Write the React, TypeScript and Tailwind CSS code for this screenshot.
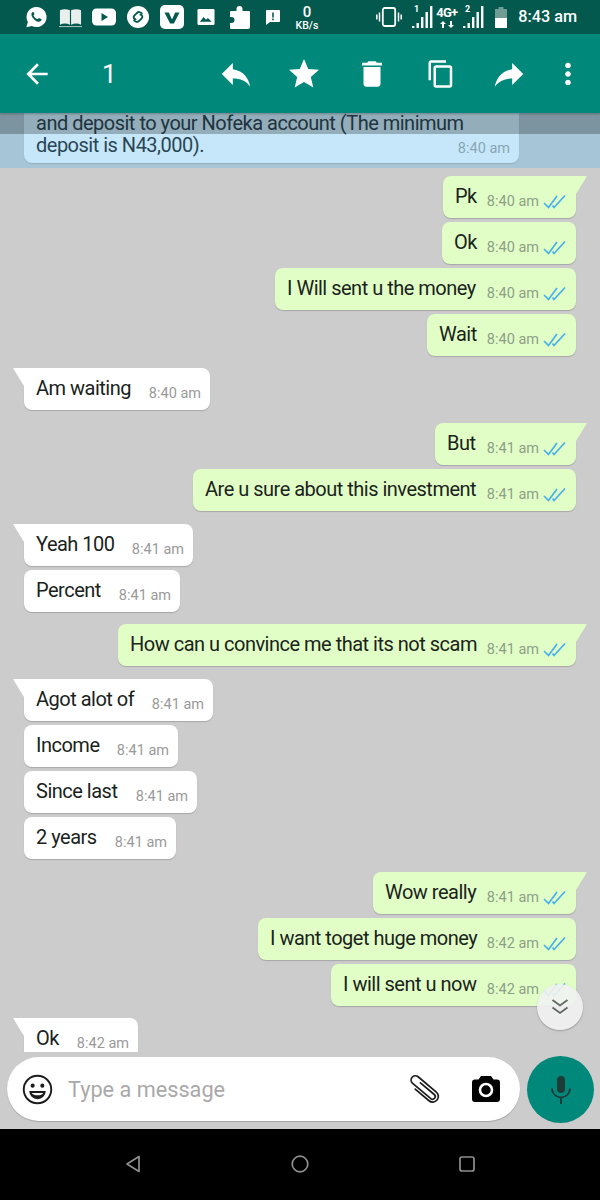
import React from "react";

const F = "font-['Roboto',sans-serif]";

function Ticks() {
  return (
    <svg width="23" height="15" viewBox="0 0 23 15" fill="none" stroke="#45b0ea" strokeWidth="1.700" className="-mt-[2px]">
      <path d="M1 9 L5.500 13.500 L14 2" />
      <path d="M9.500 11.500 L11 13.500 L22 1.500" />
    </svg>
  );
}

type M = { t: string; time: string; tail?: boolean; w: number; mt: number };

const items: (M & { out: boolean })[] = [
  { out: true, t: "Pk", time: "8:40 am", tail: true, w: 133, mt: 8 },
  { out: true, t: "Ok", time: "8:40 am", w: 134, mt: 4 },
  { out: true, t: "I Will sent u the money", time: "8:40 am", w: 301, mt: 4 },
  { out: true, t: "Wait", time: "8:40 am", w: 149, mt: 4 },
  { out: false, t: "Am waiting", time: "8:40 am", tail: true, w: 186, mt: 12 },
  { out: true, t: "But", time: "8:41 am", tail: true, w: 141, mt: 13 },
  { out: true, t: "Are u sure about this investment", time: "8:41 am", w: 383, mt: 4 },
  { out: false, t: "Yeah 100", time: "8:41 am", tail: true, w: 169, mt: 13 },
  { out: false, t: "Percent", time: "8:41 am", w: 156, mt: 4 },
  { out: true, t: "How can u convince me that its not scam", time: "8:41 am", tail: true, w: 458, mt: 12 },
  { out: false, t: "Agot alot of", time: "8:41 am", tail: true, w: 189, mt: 13 },
  { out: false, t: "Income", time: "8:41 am", w: 154, mt: 4 },
  { out: false, t: "Since last", time: "8:41 am", w: 173, mt: 4 },
  { out: false, t: "2 years", time: "8:41 am", w: 152, mt: 4 },
  { out: true, t: "Wow really", time: "8:41 am", tail: true, w: 203, mt: 13 },
  { out: true, t: "I want toget huge money", time: "8:42 am", w: 318, mt: 4 },
  { out: true, t: "I will sent u now", time: "8:42 am", w: 245, mt: 4 },
  { out: false, t: "Ok", time: "8:42 am", tail: true, w: 114, mt: 12 },
];

function Bubble({ m }: { m: M & { out: boolean } }) {
  return (
    <div
      className={`relative h-[42px] shrink-0 flex items-start justify-between pl-3 rounded-lg shadow-[0_1px_1px_rgba(0,0,0,0.18)] ${
        m.out ? "self-end bg-[#e1fec6] pr-[10px] mr-6" : "self-start bg-white pr-[9px] ml-6"
      } ${m.tail ? (m.out ? "rounded-tr-none" : "rounded-tl-none") : ""}`}
      style={{ width: m.w, marginTop: m.mt }}
    >
      {m.tail && (
        <svg
          width="11"
          height="22"
          viewBox="0 0 11 22"
          className={`absolute top-0 ${m.out ? "left-full" : "right-full"}`}
        >
          <path d={m.out ? "M0 0 H10 Q11 0 10.400 1 L0 18 Z" : "M11 0 H1 Q0 0 .6 1 L11 18 Z"} fill={m.out ? "#e1fec6" : "#ffffff"} />
        </svg>
      )}
      <span className="mt-[6px] text-[20px] tracking-[-0.5px] leading-[28px] text-[#1a231c] whitespace-nowrap">{m.t}</span>
      <span className="mt-[18px] flex items-center gap-[4px] text-[14.500px] leading-[16px] whitespace-nowrap">
        <span className={m.out ? "text-[#8e9f88]" : "text-[#9a9a9a]"}>{m.time}</span>
        {m.out && <Ticks />}
      </span>
    </div>
  );
}

function ToolIcon({ d, size = 36, className = "" }: { d: string; size?: number; className?: string }) {
  return (
    <svg width={size} height={size} viewBox="0 0 24 24" fill="#ffffff" className={`shrink-0 ${className}`}>
      <path d={d} />
    </svg>
  );
}

function Signal({ n, className = "" }: { n: string; className?: string }) {
  return (
    <svg width="21" height="26" viewBox="0 0 21 26" fill="#fff" className={className}>
      <path d="M0 23h2.400v2H0zM4.500 20h2.400v5H4.500zM9 14h2.400v11H9zM13.500 9h2.400v16h-2.400zM18 3h2.400v22H18z" />
      <text x="2" y="9" fontSize="9" fontWeight="700" fontFamily="Roboto, sans-serif" fill="#fff">{n}</text>
    </svg>
  );
}

function StatusBar() {
  return (
    <div className="h-[34px] shrink-0 bg-[#04594e] flex items-center text-white relative">
      <div className="flex items-center pl-[25px]">
        <svg width="23" height="24" viewBox="0 0 24 24">
          <path d="M12 1.500a10.500 10.500 0 0 0-9 15.800L1.400 22.800l5.700-1.500A10.500 10.500 0 1 0 12 1.500z" fill="#fff" />
          <path d="M8.400 6.800c-.4 0-1 .2-1.300.8-.8 1.400-.5 3.200.9 5.100 1.700 2.400 3.900 3.900 6 4.300 1.400.2 2.700-.4 3.100-1.500.2-.6.2-1 .1-1.200l-2.600-1.300c-.2 0-.9 1-1.200 1.200-.2.2-.4.2-.7 0-1.700-.8-2.900-2-3.700-3.600-.1-.3 0-.5.1-.6l.7-.9c.1-.2.1-.4 0-.6L9 7.100c-.1-.2-.3-.3-.6-.3z" fill="#04594e" />
        </svg>
        <svg width="23" height="21" viewBox="0 0 24 21" className="ml-[11px]">
          <path d="M1 3c3-1.600 7-1.600 10.400 0v15C8 16.500 4 16.500 1 18z M12.600 3C16 1.400 20 1.400 23 3v15c-3-1.500-7-1.500-10.400 0z" fill="#e8efed" />
          <path d="M0 19.500h24v1H0z" fill="#b9cbc7" />
        </svg>
        <svg width="24" height="18" viewBox="0 0 24 18" className="ml-[10px]">
          <rect width="24" height="17" y=".5" rx="4.500" fill="#fff" />
          <path d="M9.500 5v8l6.500-4z" fill="#04594e" />
        </svg>
        <svg width="22" height="22" viewBox="0 0 22 22" className="ml-[11px]">
          <circle cx="11" cy="11" r="11" fill="#fff" />
          <g fill="none" stroke="#04594e" strokeWidth="1.900" strokeLinecap="round">
            <path d="M14.800 7.300C13.300 5.700 11.200 5.700 9.800 7.100L7.300 9.600C6 11 6.700 13 8.600 13.400" />
            <path d="M14.800 7.300C13.300 5.700 11.200 5.700 9.800 7.100L7.300 9.600C6 11 6.700 13 8.600 13.400" transform="rotate(180 11 11)" />
          </g>
        </svg>
        <svg width="24" height="24" viewBox="0 0 24 24" className="ml-[11px]">
          <rect width="24" height="24" rx="5" fill="#fff" />
          <path d="M4.500 7.500h4.300l3.200 7 3.200-7h4.300l-5.600 11h-3.800z" fill="#04594e" />
        </svg>
        <svg width="18" height="18" viewBox="0 0 19 18" className="ml-[13px]">
          <rect width="18" height="17" x=".5" y=".5" rx="1.500" fill="#fff" />
          <path d="M3 14l4-5 2.500 3 2-2 4 4z" fill="#04594e" />
        </svg>
        <svg width="21" height="24" viewBox="0 0 21 24" className="ml-[14px]">
          <path d="M2 6h5.500V4a3 3 0 0 1 6 0v2H20a1 1 0 0 1 1 1v15a2 2 0 0 1-2 2H2a1 1 0 0 1-1-1v-5h1.500a3 3 0 0 0 0-6H1V7a1 1 0 0 1 1-1z" fill="#fff" />
        </svg>
        <svg width="16" height="16" viewBox="0 0 16 16" className="ml-[15px]">
          <path d="M2 1h12a1 1 0 0 1 1 1v10a1 1 0 0 1-1 1H5l-4 3V2a1 1 0 0 1 1-1z" fill="#fff" />
          <path d="M7.200 3.500h1.600v5H7.200zM7.200 9.600h1.600v1.600H7.200z" fill="#04594e" />
        </svg>
      </div>
      <div className="absolute left-[292px] top-[6px] w-[30px] text-center font-medium">
        <div className="text-[15px] leading-[12px]">0</div>
        <div className="text-[10.500px] leading-[9px] mt-[3px]">KB/s</div>
      </div>
      <div className="ml-auto flex items-center pr-[23px]">
        <svg width="26" height="22" viewBox="0 0 26 22" fill="none" stroke="#fff" className="shrink-0">
          <rect x="6.800" y="2" width="12.400" height="18" rx="2" strokeWidth="1.800" />
          <path d="M3.500 6.500v9M.8 8.500v5M22.500 6.500v9M25.200 8.500v5" strokeWidth="1.500" />
        </svg>
        <Signal n="1" className="ml-[10px] -mt-[2px]" />
        <div className="w-[21px] ml-[3px] flex flex-col items-center font-bold">
          <div className="text-[13px] leading-[12px] tracking-[-0.8px]">4G+</div>
          <svg width="14" height="7" viewBox="0 0 14 7" fill="#fff" className="mt-[2px]">
            <path d="M3 0l3 3H4v4H2V3H0zM11 7l3-3h-2V0h-2v4H8z" />
          </svg>
        </div>
        <Signal n="2" className="ml-[6px] -mt-[2px]" />
        <svg width="12" height="21" viewBox="0 0 12 21" className="ml-[11px]">
          <rect x="3.500" y="0" width="5" height="3" fill="#6f9c93" />
          <rect x="0" y="2" width="12" height="9" fill="#6f9c93" />
          <rect x="0" y="11" width="12" height="10" fill="#fff" />
        </svg>
        <span className="ml-[11px] text-[16.200px] leading-[20px] font-medium">8:43 am</span>
      </div>
    </div>
  );
}

function Toolbar() {
  return (
    <div className="h-[79px] shrink-0 bg-[#00897a] flex items-center relative z-10 shadow-[0_1px_2px_rgba(0,0,0,0.25)]">
      <ToolIcon className="ml-[21px]" size={32} d="M20 11H7.830l5.590-5.590L12 4l-8 8 8 8 1.410-1.410L7.830 13H20z" />
      <span className="ml-[49px] w-[16px] shrink-0 text-white text-[26px] leading-[30px] font-normal">1</span>
      <ToolIcon className="ml-[99px]" size={38} d="M10 9V5l-7 7 7 7v-4.100c5 0 8.500 1.600 11 5.100-1-5-4-10-11-11z" />
      <ToolIcon className="ml-[31px]" size={36} d="M12 17.270 18.180 21l-1.640-7.030L22 9.240l-7.190-.61L12 2 9.190 8.630 2 9.240l5.460 4.730L5.820 21z" />
      <ToolIcon className="ml-[33px]" size={34} d="M6 19c0 1.100.9 2 2 2h8c1.100 0 2-.9 2-2V7H6v12zM19 4h-3.500l-1-1h-5l-1 1H5v2h14V4z" />
      <ToolIcon className="ml-[37px]" size={30} d="M16 1H4c-1.100 0-2 .9-2 2v14h2V3h12V1zm3 4H8c-1.100 0-2 .9-2 2v14c0 1.100.9 2 2 2h11c1.100 0 2-.9 2-2V7c0-1.100-.9-2-2-2zm0 16H8V7h11v14z" />
      <ToolIcon className="ml-[34px]" size={38} d="M14 9V5l7 7-7 7v-4.100c-5 0-8.500 1.600-11 5.100 1-5 4-10 11-11z" />
      <ToolIcon className="ml-[23px]" size={34} d="M12 8c1.100 0 2-.9 2-2s-.9-2-2-2-2 .9-2 2 .9 2 2 2zm0 2c-1.100 0-2 .9-2 2s.9 2 2 2 2-.9 2-2-.9-2-2-2zm0 6c-1.100 0-2 .9-2 2s.9 2 2 2 2-.9 2-2-.9-2-2-2z" />
    </div>
  );
}

function Banner() {
  return (
    <div className="relative h-[55px] shrink-0 bg-[#a6c5d6]">
      <div className="mx-6 w-[495px] h-[51px] bg-[#c5e7f9] rounded-b-lg shadow-[0_1px_1px_rgba(0,0,0,0.12)] pl-3 text-[20px] tracking-[-0.500px] leading-[22px] text-[#2a4654]">
        <div className="whitespace-nowrap -mt-[1px]">and deposit to your Nofeka account (The minimum</div>
        <div className="flex justify-between whitespace-nowrap pr-[9px]">
          <span>deposit is N43,000).</span>
          <span className="text-[14.500px] tracking-normal leading-[16px] mt-[7px] text-[#8ba6b4]">8:40 am</span>
        </div>
      </div>
      <div className="absolute left-0 right-0 top-0 h-[21px] bg-[rgba(0,0,0,0.25)]" />
    </div>
  );
}

function Composer() {
  return (
    <div className="absolute left-0 right-0 bottom-0 h-[77px] flex items-start pt-[5px] bg-[#cccccc]">
      <div className="ml-[7px] w-[513px] h-[64px] rounded-[32px] bg-white shadow-[0_1px_1px_rgba(0,0,0,0.2)] flex items-center">
        <svg width="31" height="31" viewBox="0 0 32 32" className="ml-[15px] shrink-0" fill="none">
          <circle cx="16" cy="16" r="14.200" stroke="#1c1c1c" strokeWidth="2" />
          <circle cx="11" cy="12" r="2.100" fill="#1c1c1c" />
          <circle cx="21" cy="12" r="2.100" fill="#1c1c1c" />
          <path d="M7.500 17.500h17a8.500 8.500 0 0 1-17 0z" fill="#1c1c1c" />
          <path d="M10 19.500h12a6.500 4 0 0 1-12 0z" fill="#fff" />
        </svg>
        <span className="ml-[15px] mt-[2px] text-[21.700px] leading-[28px] text-[#a9a9a9]">Type a message</span>
        <svg width="32" height="30" viewBox="0 0 32 30" className="ml-auto shrink-0" fill="none" stroke="#1c1c1c" strokeWidth="1.800" strokeLinecap="round">
          <g transform="translate(16 15) rotate(40) scale(.95) translate(-19 -7)">
            <path d="M12 4.500H31a2.800 2.800 0 0 1 0 5.600H6a4.500 4.500 0 0 1 0-9H31a6 6 0 0 1 0 12H12" />
          </g>
        </svg>
        <svg width="28" height="26" viewBox="0 0 28 26" className="ml-[32px] mr-[20px] shrink-0">
          <path d="M9 0h10l2.500 3.500H25a3 3 0 0 1 3 3V23a3 3 0 0 1-3 3H3a3 3 0 0 1-3-3V6.500a3 3 0 0 1 3-3h3.500z" fill="#000" />
          <circle cx="14" cy="14" r="6" fill="none" stroke="#fff" strokeWidth="2.600" />
        </svg>
      </div>
      <div className="ml-[7px] -mt-[1px] w-[67px] h-[67px] rounded-full bg-[#00897a] flex items-center justify-center shrink-0">
        <svg width="22" height="28" viewBox="0 0 22 28" fill="#1d3c37">
          <rect x="7" y="0" width="8" height="17" rx="4" />
          <path d="M1 12.500h2a8 8 0 0 0 16 0h2a10 10 0 0 1-9 9.700V28h-2v-5.800a10 10 0 0 1-9-9.700z" />
        </svg>
      </div>
    </div>
  );
}

export default function App() {
  return (
    <div className={`${F} w-[600px] h-[1200px] flex flex-col overflow-hidden bg-[#cccccc]`}>
      <StatusBar />
      <Toolbar />
      <Banner />
      <div className="relative flex-1 min-h-0">
        <div className="h-[884px] overflow-hidden flex flex-col">
          {items.map((m, i) => (
            <Bubble key={i} m={m} />
          ))}
        </div>
        <div className="absolute right-[17px] bottom-[99px] w-[46px] h-[46px] rounded-full bg-[#f1f2f1]/90 shadow-[0_1px_2px_rgba(0,0,0,0.25)] flex items-center justify-center">
          <svg width="18" height="16" viewBox="0 0 18 16" fill="none" stroke="#5f6663" strokeWidth="1.800">
            <path d="M1.500 1 9 6.500 16.500 1M1.500 8.500 9 14l7.500-5.500" />
          </svg>
        </div>
        <Composer />
      </div>
      <div className="h-[71px] shrink-0 bg-black relative">
        <svg width="16" height="18" viewBox="0 0 16 18" fill="none" stroke="#8f8f8f" strokeWidth="1.700" className="absolute left-[125px] top-[26px]">
          <path d="M14 1.500v15L2 9z" strokeLinejoin="round" />
        </svg>
        <svg width="18" height="18" viewBox="0 0 18 18" fill="none" stroke="#8f8f8f" strokeWidth="1.700" className="absolute left-[291px] top-[26px]">
          <circle cx="9" cy="9" r="7.800" />
        </svg>
        <svg width="16" height="16" viewBox="0 0 16 16" fill="none" stroke="#8f8f8f" strokeWidth="1.700" className="absolute left-[459px] top-[27px]">
          <rect x="1" y="1" width="14" height="14" rx="2" />
        </svg>
      </div>
    </div>
  );
}
